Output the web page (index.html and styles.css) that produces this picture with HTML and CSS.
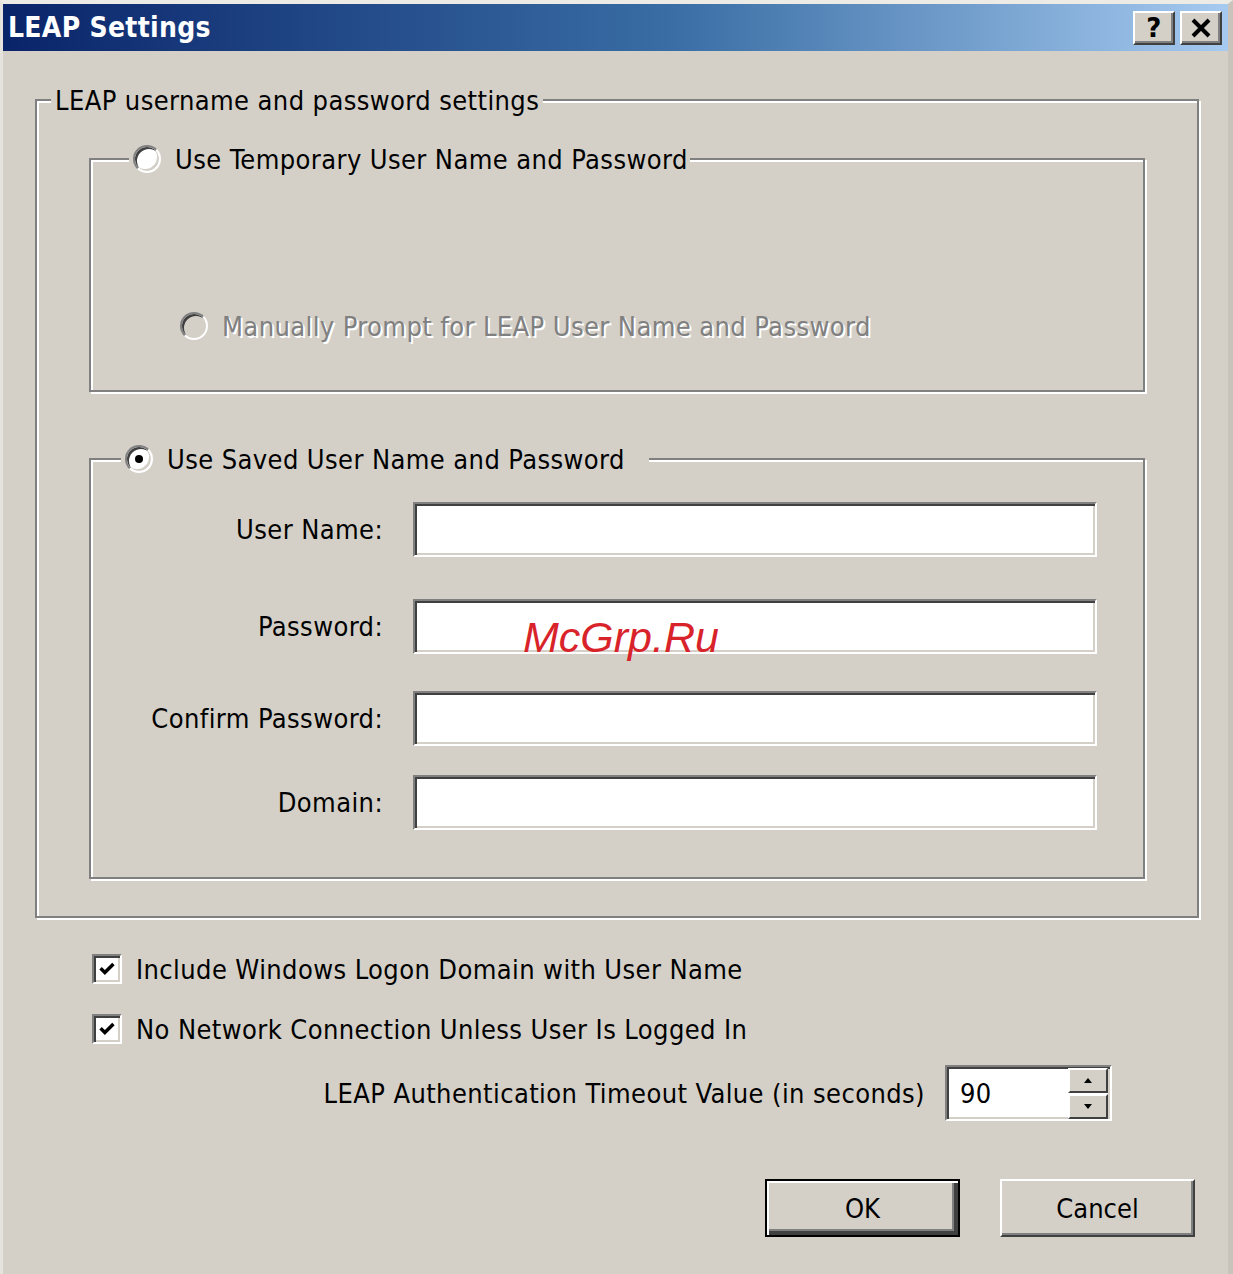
FILE: index.html
```html
<!DOCTYPE html>
<html lang="en">
<head>
  <meta charset="UTF-8" />
  <title>LEAP Settings</title>
  <link rel="stylesheet" href="styles.css">
</head>
<body>
  <div class="window">
    <div class="titlebar">
      <span class="title">LEAP Settings</span>
      <div class="caption-buttons">
        <span class="cbtn help">?</span>
        <span class="cbtn">
          <svg width="22" height="20" viewBox="0 0 22 20"><path d="M3 2 L19 18 M19 2 L3 18" stroke="#000" stroke-width="4" fill="none"/></svg>
        </span>
      </div>
    </div>

    <div class="client">
      <fieldset class="group outer">
        <legend>LEAP username and password settings</legend>

        <fieldset class="group temp">
          <legend><span class="radio"></span>Use Temporary User Name and Password</legend>
          <div class="option disabled"><span class="radio"></span>Manually Prompt for LEAP User Name and Password</div>
        </fieldset>

        <fieldset class="group saved">
          <legend><span class="radio checked"></span>Use Saved User Name and Password</legend>
          <div class="fields">
            <div class="row"><label>User Name:</label><div class="field"></div></div>
            <div class="row"><label>Password:</label><div class="field"></div></div>
            <div class="row"><label>Confirm Password:</label><div class="field"></div></div>
            <div class="row"><label>Domain:</label><div class="field"></div></div>
          </div>
        </fieldset>
      </fieldset>

      <div class="check first"><span class="box"><svg width="20" height="20" viewBox="0 0 14 14"><polyline points="2.5,6.5 5.5,9.5 11.5,3.5" stroke="#000" stroke-width="2.4" fill="none"/></svg></span>Include Windows Logon Domain with User Name</div>
      <div class="check"><span class="box"><svg width="20" height="20" viewBox="0 0 14 14"><polyline points="2.5,6.5 5.5,9.5 11.5,3.5" stroke="#000" stroke-width="2.4" fill="none"/></svg></span>No Network Connection Unless User Is Logged In</div>

      <div class="timeout">
        <span>LEAP Authentication Timeout Value (in seconds)</span>
        <div class="spin">
          <span class="value">90</span>
          <div class="spin-buttons">
            <span class="arrow"><svg width="8" height="5" viewBox="0 0 8 5"><path d="M4 0 L8 5 L0 5 Z" fill="#000"/></svg></span>
            <span class="arrow"><svg width="8" height="5" viewBox="0 0 8 5"><path d="M0 0 L8 0 L4 5 Z" fill="#000"/></svg></span>
          </div>
        </div>
      </div>

      <div class="actions">
        <button class="btn default">OK</button>
        <button class="btn">Cancel</button>
      </div>
    </div>

    <div class="watermark">McGrp.Ru</div>
  </div>
</body>
</html>
```

FILE: styles.css
```css
body {
  margin: 0;
  font-family: "DejaVu Sans Condensed", "DejaVu Sans", sans-serif;
  font-size: 27px;
  letter-spacing: 0.4px;
  color: #000;
}
.window {
  position: relative;
  width: 1233px;
  height: 1274px;
  box-sizing: border-box;
  background: #d4d0c8;
  border-style: solid;
  border-width: 4px 5px 0 3px;
  border-color: #ecebe6 #c8c4bc #d4d0c8 #e6e3dc;
}
.titlebar {
  height: 47px;
  display: flex;
  align-items: center;
  justify-content: space-between;
  padding: 0 6px 0 5px;
  background: linear-gradient(to right, #0a246a, #3a6ea5 55%, #a6caf0);
}
.title {
  color: #fff;
  font-weight: bold;
  font-size: 28px;
  letter-spacing: 0.3px;
}
.caption-buttons {
  display: flex;
  gap: 5px;
}
.cbtn {
  width: 38px;
  height: 30px;
  display: flex;
  align-items: center;
  justify-content: center;
  background: #d4d0c8;
  border: 2px solid;
  border-color: #fff #404040 #404040 #fff;
  box-shadow: inset -2px -2px #808080;
}
.help {
  font-family: "DejaVu Sans", sans-serif;
  font-weight: bold;
  font-size: 26px;
}

.client {
  padding: 0 29px 0 32px;
}
.group {
  margin: 0;
  padding: 0;
  border: 2px solid #808080;
  box-shadow: inset 2px 2px #fff, 2px 2px #fff;
}
.group legend {
  display: flex;
  align-items: center;
  height: 30px;
  padding: 0 4px;
  background: #d4d0c8;
}
.outer {
  margin-top: 34px;
  padding-bottom: 37px;
}
.outer > legend {
  margin-left: 14px;
}
.temp, .saved {
  margin-left: 52px;
  width: 1056px;
  box-sizing: border-box;
}
.temp {
  margin-top: 29px;
  padding-bottom: 49px;
}
.temp > legend {
  margin-left: 38px;
  padding-right: 2px;
}
.saved {
  margin-top: 52px;
  padding-bottom: 47px;
}
.saved > legend {
  margin-left: 30px;
  padding-right: 24px;
}

.radio {
  position: relative;
  width: 24px;
  height: 24px;
  margin-right: 14px;
  border-radius: 50%;
  border: 2px solid;
  border-color: #808080 #fff #fff #808080;
  background: #fff;
  box-shadow: inset 2px 2px #404040, inset -2px -2px #d4d0c8;
  flex: none;
}
.radio.checked::after {
  content: "";
  position: absolute;
  left: 8px;
  top: 8px;
  width: 8px;
  height: 8px;
  border-radius: 50%;
  background: #000;
}
.option {
  display: flex;
  align-items: center;
  height: 30px;
  margin: 137px 0 0 89px;
}
.disabled {
  color: #808080;
  text-shadow: 2px 2px #fff;
}
.disabled .radio {
  background: #d4d0c8;
}

.fields {
  margin-top: 28px;
}
.row {
  display: grid;
  grid-template-columns: 292px 684px;
  column-gap: 30px;
  align-items: center;
}
.row:nth-child(2) { margin-top: 42px; }
.row:nth-child(3) { margin-top: 37px; }
.row:nth-child(4) { margin-top: 29px; }
.row label {
  text-align: right;
}
.field, .spin {
  height: 55px;
  box-sizing: border-box;
  background: #fff;
  border: 2px solid;
  border-color: #808080 #fff #fff #808080;
  box-shadow: inset 2px 2px #404040, inset -2px -2px #d4d0c8;
}

.check {
  display: flex;
  align-items: center;
  height: 30px;
  margin: 30px 0 0 57px;
}
.check.first {
  margin-top: 36px;
}
.box {
  width: 30px;
  height: 30px;
  box-sizing: border-box;
  margin-right: 14px;
  display: flex;
  align-items: center;
  justify-content: center;
  background: #fff;
  border: 2px solid;
  border-color: #808080 #fff #fff #808080;
  box-shadow: inset 2px 2px #404040, inset -2px -2px #d4d0c8;
}

.timeout {
  display: flex;
  justify-content: flex-end;
  align-items: center;
  gap: 20px;
  margin-top: 21px;
  padding-right: 87px;
}
.spin {
  width: 167px;
  height: 56px;
  display: flex;
  align-items: center;
  justify-content: space-between;
  padding: 3px 2px 3px 13px;
}
.spin-buttons {
  display: flex;
  flex-direction: column;
  gap: 1px;
}
.arrow {
  width: 36px;
  height: 21px;
  display: flex;
  align-items: center;
  justify-content: center;
  background: #d4d0c8;
  border: 2px solid;
  border-color: #fff #404040 #404040 #fff;
}

.actions {
  display: flex;
  justify-content: flex-end;
  gap: 40px;
  margin-top: 58px;
  padding-right: 4px;
}
.btn {
  width: 195px;
  height: 58px;
  font: inherit;
  color: #000;
  background: #d4d0c8;
  border: 2px solid;
  border-color: #fff #404040 #404040 #fff;
  box-shadow: inset -2px -2px #808080;
}
.btn.default {
  outline: 2px solid #000;
  outline-offset: -2px;
  border-color: #000;
  box-shadow: inset 2px 2px #fff, inset -4px -4px #404040, inset -6px -6px #808080;
}

.watermark {
  position: absolute;
  left: 520px;
  top: 612px;
  font-family: "Liberation Sans", sans-serif;
  font-style: italic;
  font-size: 43px;
  letter-spacing: 0;
  line-height: 1;
  color: #d9232a;
}
```
